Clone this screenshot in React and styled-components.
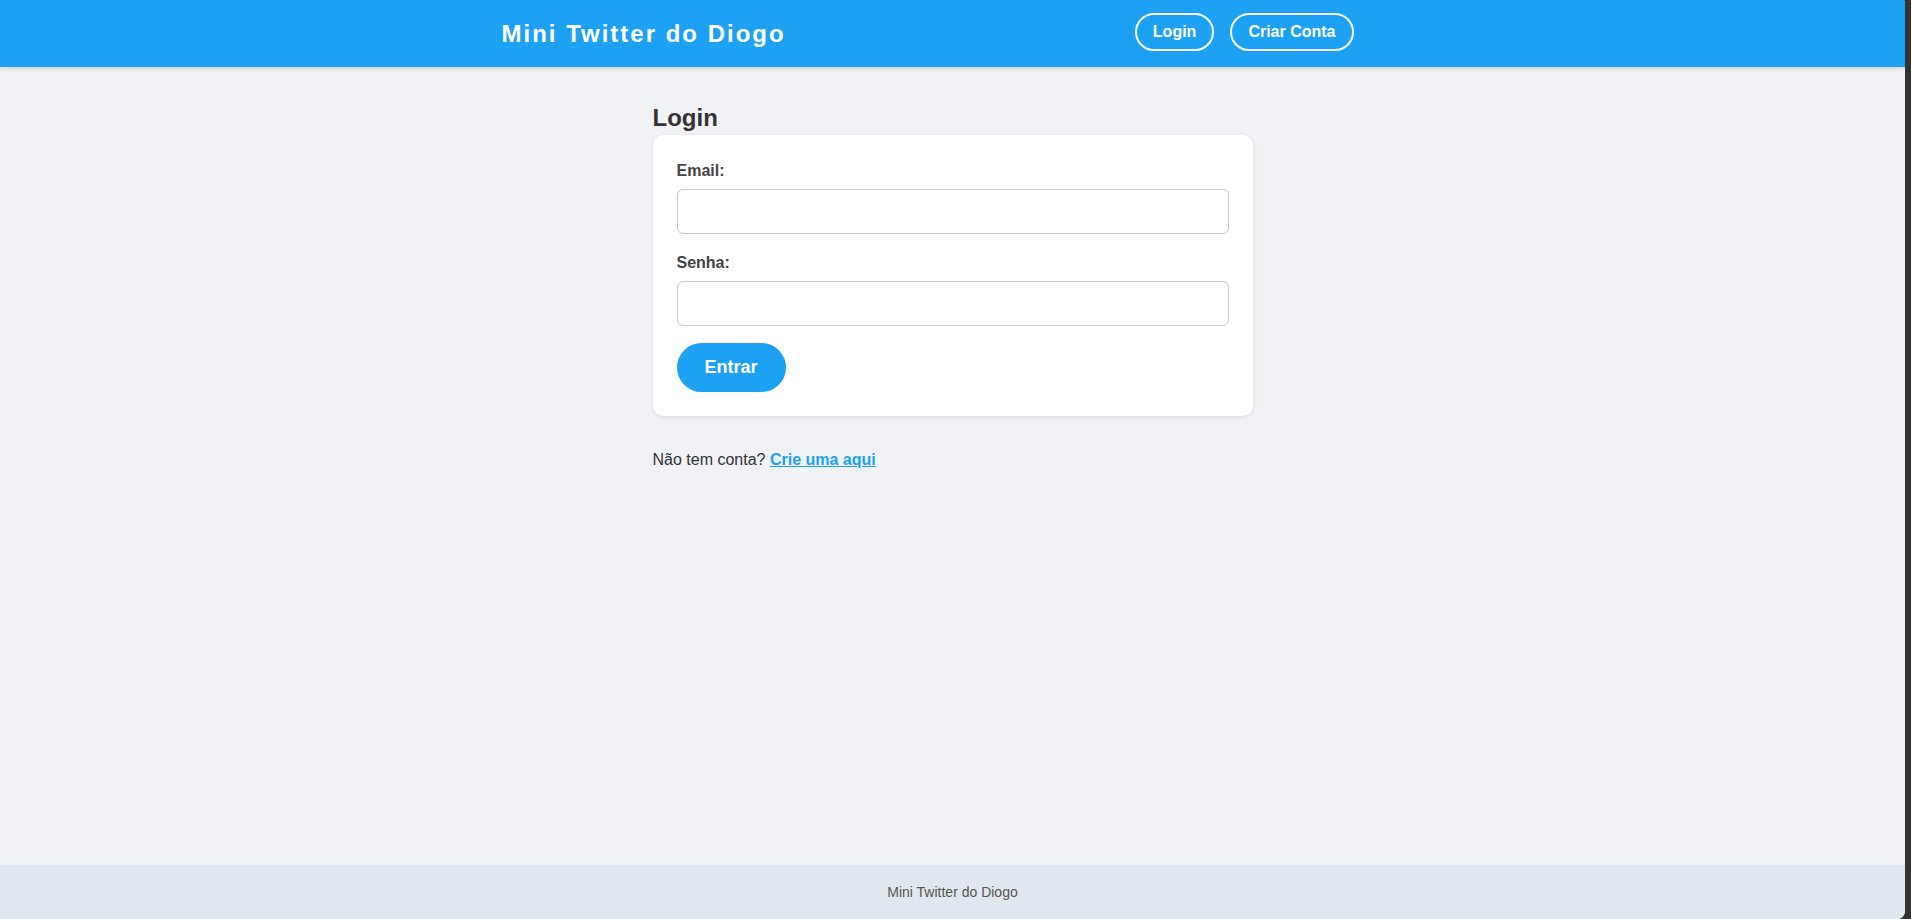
import React, { useState } from 'react';
import styled, { createGlobalStyle } from 'styled-components';

const GlobalStyle = createGlobalStyle`
  * {
    box-sizing: border-box;
  }

  html, body {
    margin: 0;
    padding: 0;
    background: #333;
    font-family: "Liberation Sans", Arial, sans-serif;
  }
`;

const Page = styled.div`
  display: flex;
  flex-direction: column;
  width: calc(100vw - 6px);
  min-height: 100vh;
  background: #f0f2f5;
  border-radius: 0 3px 8px 0;
  overflow: hidden;
`;

const Header = styled.header`
  background: #1da1f2;
  height: 67px;
  box-shadow: 0 2px 4px rgba(0, 0, 0, 0.12);
  position: relative;
  z-index: 1;
`;

const HeaderInner = styled.div`
  max-width: 902px;
  height: 100%;
  margin: 0 auto;
  display: flex;
  align-items: center;
  justify-content: space-between;
`;

const Brand = styled.h1`
  margin: 0;
  color: #fff;
  font-size: 24px;
  font-weight: bold;
  letter-spacing: 2px;
`;

const Nav = styled.nav`
  display: flex;
  gap: 16px;
  padding-right: 50px;
  margin-top: -3px;
`;

const NavButton = styled.a`
  display: inline-block;
  padding: 8px 16px;
  border: 2px solid #fff;
  border-radius: 20px;
  color: #fff;
  font-size: 16px;
  font-weight: bold;
  text-decoration: none;
  cursor: pointer;
`;

const Main = styled.main`
  flex: 1;
  width: 600px;
  margin: 0 auto;
  padding-top: 37px;
`;

const Title = styled.h2`
  margin: 0 0 3px;
  color: #333;
  font-size: 24px;
  font-weight: bold;
`;

const Card = styled.div`
  background: #fff;
  border-radius: 10px;
  box-shadow: 0 1px 4px rgba(0, 0, 0, 0.1);
  padding: 27px 24px 24px;
`;

const Field = styled.div`
  margin-bottom: ${(p) => (p.$last ? '17px' : '20px')};
`;

const Label = styled.label`
  display: block;
  margin-bottom: 9px;
  color: #444;
  font-size: 16px;
  font-weight: bold;
`;

const Input = styled.input`
  display: block;
  width: 100%;
  padding: 12px;
  height: 45px;
  border: 1px solid #ccc;
  border-radius: 6px;
  font-size: 16px;
  font-family: inherit;
  background: #fff;
  outline: none;
`;

const Submit = styled.button`
  padding: 14px 28px;
  border: none;
  border-radius: 25px;
  background: #1da1f2;
  color: #fff;
  font-size: 18px;
  font-weight: bold;
  font-family: inherit;
  cursor: pointer;
`;

const Hint = styled.p`
  margin: 35px 0 0;
  color: #333;
  font-size: 16px;

  a {
    color: #1da1f2;
    font-weight: bold;
  }
`;

const Footer = styled.footer`
  height: 54px;
  background: #e1e8ed;
  display: flex;
  align-items: center;
  justify-content: center;
  color: #555;
  font-size: 14px;
`;

const App = () => {
  const [email, setEmail] = useState('');
  const [senha, setSenha] = useState('');

  const handleSubmit = (e) => {
    e.preventDefault();
  };

  return (
    <>
      <GlobalStyle />
      <Page>
        <Header>
          <HeaderInner>
            <Brand>Mini Twitter do Diogo</Brand>
            <Nav>
              <NavButton>Login</NavButton>
              <NavButton>Criar Conta</NavButton>
            </Nav>
          </HeaderInner>
        </Header>

        <Main>
          <Title>Login</Title>
          <Card>
            <form onSubmit={handleSubmit}>
              <Field>
                <Label htmlFor="email">Email:</Label>
                <Input id="email" type="email" value={email} onChange={(e) => setEmail(e.target.value)} />
              </Field>
              <Field $last>
                <Label htmlFor="senha">Senha:</Label>
                <Input id="senha" type="password" value={senha} onChange={(e) => setSenha(e.target.value)} />
              </Field>
              <Submit type="submit">Entrar</Submit>
            </form>
          </Card>
          <Hint>
            Não tem conta? <a href="#">Crie uma aqui</a>
          </Hint>
        </Main>

        <Footer>Mini Twitter do Diogo</Footer>
      </Page>
    </>
  );
};

export default App;
